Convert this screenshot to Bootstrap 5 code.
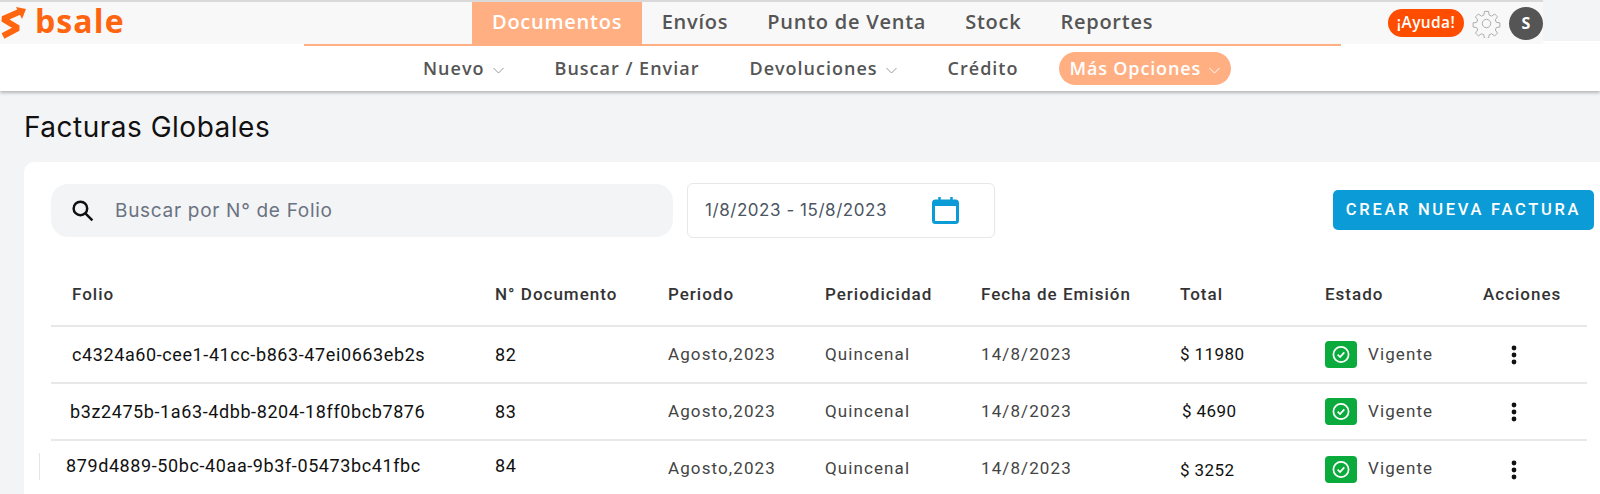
<!DOCTYPE html>
<html lang="es">
<head>
<meta charset="utf-8">
<title>Facturas Globales</title>
<link rel="stylesheet" href="https://cdn.jsdelivr.net/npm/bootstrap@5.3.0/dist/css/bootstrap.min.css">
<style>
html,body{height:494px;overflow:hidden}
body{background:#f3f4f6;font-family:Roboto,sans-serif;color:#333}
.headwrap{background:#fff}
.headleft{width:1543px}
.headfill{height:41px;background:#f3f4f6}
.topline{height:2px;background:#d9d9d9}
.topbar{height:42px;background:#f8f8f8}
.logoarea{width:472px}
.logotxt{font-family:"Open Sans",sans-serif;font-weight:700;font-size:32px;letter-spacing:1.1px;color:#ff640f;line-height:1;margin-left:8px;padding-bottom:5px}
.maintab{font-family:"Open Sans",sans-serif;font-weight:600;font-size:20px;letter-spacing:.75px;color:#555;padding:0 20px;height:42px;line-height:40px;text-decoration:none}
.maintab.sel{background:#ffaf82;color:#fff}
.maintab.snug{padding:0 19.5px}
.helpbtn{background:#ff4d00;color:#fff;font-family:"Open Sans",sans-serif;font-weight:600;font-size:15.5px;letter-spacing:.4px;border-radius:14px;height:28px;width:76px;line-height:27px;text-align:center;white-space:nowrap}
.avatar{width:34px;height:33px;border-radius:50%;background:#555;color:#fff;font-family:"Open Sans",sans-serif;font-weight:700;font-size:16px;line-height:33px;text-align:center}
.subwrap{background:#fff;height:47px;box-shadow:0 2px 3px rgba(0,0,0,.25)}
.orangeline{height:2px;background:#ffaf82;width:1037px;margin-left:304px}
.subbar{height:45px;padding-left:423px}
.subitem{font-family:"Open Sans",sans-serif;font-weight:600;font-size:18px;letter-spacing:1px;color:#555;white-space:nowrap;text-decoration:none}
.subitem svg{margin-left:7px;vertical-align:middle}
.gapitem{margin-left:50px}
.subpill{background:#ffaf82;color:#fff;border-radius:17px;height:33px;line-height:32px;padding:0 10px;margin-left:41px;letter-spacing:.85px}
.pagetitle{font-family:Inter,sans-serif;font-size:28px;letter-spacing:.5px;font-weight:400;color:#111;margin:0;padding:20px 0 0 24px;line-height:32px;height:71px}
.panel{position:relative;background:#fff;border-radius:10px 0 0 0;margin-left:24px;height:340px;padding:22px 6px 0 27px}
.straymark{position:absolute;left:15px;top:291px;width:1px;height:27px;background:#e4e4e4}
.searchbox{width:622px;height:53px;background:#f3f4f6;border-radius:17px;padding-left:19px}
.searchbox span{font-family:Inter,sans-serif;font-size:19px;letter-spacing:.7px;color:#6b7280;margin-left:20px;padding-top:2px}
.datebox{width:308px;height:55px;border:1px solid #e5e7eb;border-radius:6px;margin:-1px 0 0 14px;padding:0 35px 0 17px;font-family:Inter,sans-serif;font-size:17px;letter-spacing:.55px;color:#4b5563}
.newbtn{margin-left:auto;width:261px;height:40px;background:#0b9bd6;color:#fff;border:0;border-radius:5px;font-family:Roboto,sans-serif;font-weight:500;font-size:16.5px;letter-spacing:2.7px;padding:0;margin-top:6px;white-space:nowrap}
.facttable{table-layout:fixed;width:1536px;margin:24px 0 0;font-family:Roboto,sans-serif}
.facttable th,.facttable td{padding:0;vertical-align:middle;border-bottom:2px solid #e8e8e8;box-shadow:none;font-size:17px;letter-spacing:1.1px;color:#444;font-weight:400;white-space:nowrap}
.facttable th{height:64px;font-weight:500;color:#333;letter-spacing:1px;padding-top:2px}
.facttable td{height:57px}
.facttable tr:last-child td{border-bottom:0}
.facttable .dark{color:#111;font-size:18px;letter-spacing:.6px}
.facttable .money{font-size:17px;letter-spacing:.4px}
.c1{padding-left:21px!important}
.c1b{padding-left:19px!important}
.c1c{padding-left:15px!important;padding-bottom:7px!important}
.up3{padding-bottom:7px!important}
.down2{padding-top:4px!important}
.in2{padding-left:2px!important}
.statusicon{width:32px;height:27px;border-radius:4px;background:#0aaa3c;margin-right:11px}
.kebab{padding-left:28px!important}
</style>
</head>
<body>
<div class="headwrap d-flex">
  <div class="headleft">
    <div class="topline"></div>
    <div class="topbar d-flex align-items-center">
      <div class="logoarea d-flex align-items-center">
        <svg width="27" height="34" viewBox="0 0 27 34" fill="none" stroke="#ff640f" stroke-width="6"><path d="M19 6L3 13l15 9L3 30" stroke-linejoin="bevel"/><path d="M16 1l10 2-4 10z" fill="#ff640f" stroke="none"/></svg>
        <span class="logotxt">bsale</span>
      </div>
      <a class="maintab sel" href="#">Documentos</a>
      <a class="maintab snug" href="#">Envíos</a>
      <a class="maintab snug" href="#">Punto de Venta</a>
      <a class="maintab snug" href="#">Stock</a>
      <a class="maintab snug" href="#">Reportes</a>
      <div class="ms-auto d-flex align-items-center gap-2">
        <div class="helpbtn">¡Ayuda!</div>
        <svg width="29" height="29" viewBox="0 0 24 24" fill="none" stroke="#aaa" stroke-width=".8"><circle cx="12" cy="12" r="3.500"/><path d="M10.300 2h3.400l.5 3 2 .9 2.500-1.800 2.400 2.400-1.800 2.500.8 2 3 .5v3.400l-3 .5-.8 2 1.800 2.500-2.400 2.400-2.500-1.800-2 .8-.5 3h-3.400l-.5-3-2-.8-2.500 1.800-2.400-2.400 1.800-2.500-.8-2-3-.5v-3.400l3-.5.8-2-1.800-2.500 2.400-2.400 2.500 1.800 2-.9z"/></svg>
        <div class="avatar">S</div>
      </div>
    </div>
  </div>
  <div class="headfill flex-grow-1"></div>
</div>
<div class="subwrap">
  <div class="orangeline"></div>
  <div class="subbar d-flex align-items-center">
    <a class="subitem" href="#">Nuevo<svg width="13" height="7" viewBox="0 0 12 7" fill="none" stroke="#999" stroke-width="1"><path d="M1 1l5 5 5-5"/></svg></a>
    <a class="subitem gapitem" href="#">Buscar / Enviar</a>
    <a class="subitem gapitem" href="#">Devoluciones<svg width="13" height="7" viewBox="0 0 12 7" fill="none" stroke="#999" stroke-width="1"><path d="M1 1l5 5 5-5"/></svg></a>
    <a class="subitem gapitem" href="#">Crédito</a>
    <a class="subitem subpill" href="#">Más Opciones<svg width="13" height="7" viewBox="0 0 12 7" fill="none" stroke="#fff" stroke-width="1"><path d="M1 1l5 5 5-5"/></svg></a>
  </div>
</div>
<h1 class="pagetitle">Facturas Globales</h1>
<div class="panel">
  <div class="straymark"></div>
  <div class="d-flex align-items-start">
    <div class="searchbox d-flex align-items-center">
      <svg width="25" height="25" viewBox="0 0 24 24" fill="none" stroke="#111" stroke-width="2.400"><circle cx="10" cy="10" r="6.500"/><path d="M15 15l6.500 6.500"/></svg>
      <span>Buscar por N° de Folio</span>
    </div>
    <div class="datebox d-flex align-items-center justify-content-between">
      <span>1/8/2023 - 15/8/2023</span>
      <svg width="27" height="27" viewBox="0 0 27 27" fill="none" stroke="#0b9bd6" stroke-width="3"><rect x="1.500" y="4" width="24" height="21.500" rx="2"/><path d="M1.500 6h24" stroke-width="6"/><path d="M7.500 0v4M19.500 0v4" stroke-width="2.500"/></svg>
    </div>
    <button class="newbtn" type="button">CREAR NUEVA FACTURA</button>
  </div>
  <table class="table facttable">
    <colgroup><col style="width:444px"><col style="width:173px"><col style="width:157px"><col style="width:156px"><col style="width:199px"><col style="width:145px"><col style="width:158px"><col style="width:104px"></colgroup>
    <thead><tr><th class="c1">Folio</th><th>N° Documento</th><th>Periodo</th><th>Periodicidad</th><th>Fecha de Emisión</th><th>Total</th><th>Estado</th><th>Acciones</th></tr></thead>
    <tbody>
      <tr><td class="c1 dark">c4324a60-cee1-41cc-b863-47ei0663eb2s</td><td class="dark">82</td><td>Agosto,2023</td><td>Quincenal</td><td>14/8/2023</td><td class="dark money">$ 11980</td><td><div class="d-flex align-items-center"><span class="statusicon d-flex align-items-center justify-content-center"><svg width="20" height="19" viewBox="0 0 20 20" fill="none" stroke="#fff" stroke-width="1.800"><circle cx="10" cy="10" r="8"/><path d="M6.500 10.200l2.500 2.500 4.500-5"/></svg></span>Vigente</div></td><td class="kebab"><svg width="6" height="20" viewBox="0 0 6 20" fill="#111"><circle cx="3" cy="3" r="2.400"/><circle cx="3" cy="10" r="2.400"/><circle cx="3" cy="17" r="2.400"/></svg></td></tr>
      <tr><td class="c1b dark">b3z2475b-1a63-4dbb-8204-18ff0bcb7876</td><td class="dark">83</td><td>Agosto,2023</td><td>Quincenal</td><td>14/8/2023</td><td class="dark money in2">$ 4690</td><td><div class="d-flex align-items-center"><span class="statusicon d-flex align-items-center justify-content-center"><svg width="20" height="19" viewBox="0 0 20 20" fill="none" stroke="#fff" stroke-width="1.800"><circle cx="10" cy="10" r="8"/><path d="M6.500 10.200l2.500 2.500 4.500-5"/></svg></span>Vigente</div></td><td class="kebab"><svg width="6" height="20" viewBox="0 0 6 20" fill="#111"><circle cx="3" cy="3" r="2.400"/><circle cx="3" cy="10" r="2.400"/><circle cx="3" cy="17" r="2.400"/></svg></td></tr>
      <tr><td class="c1c dark">879d4889-50bc-40aa-9b3f-05473bc41fbc</td><td class="dark up3">84</td><td>Agosto,2023</td><td>Quincenal</td><td>14/8/2023</td><td class="dark money down2">$ 3252</td><td><div class="d-flex align-items-center"><span class="statusicon d-flex align-items-center justify-content-center"><svg width="20" height="19" viewBox="0 0 20 20" fill="none" stroke="#fff" stroke-width="1.800"><circle cx="10" cy="10" r="8"/><path d="M6.500 10.200l2.500 2.500 4.500-5"/></svg></span>Vigente</div></td><td class="kebab"><svg width="6" height="20" viewBox="0 0 6 20" fill="#111"><circle cx="3" cy="3" r="2.400"/><circle cx="3" cy="10" r="2.400"/><circle cx="3" cy="17" r="2.400"/></svg></td></tr>
    </tbody>
  </table>
</div>
</body>
</html>
